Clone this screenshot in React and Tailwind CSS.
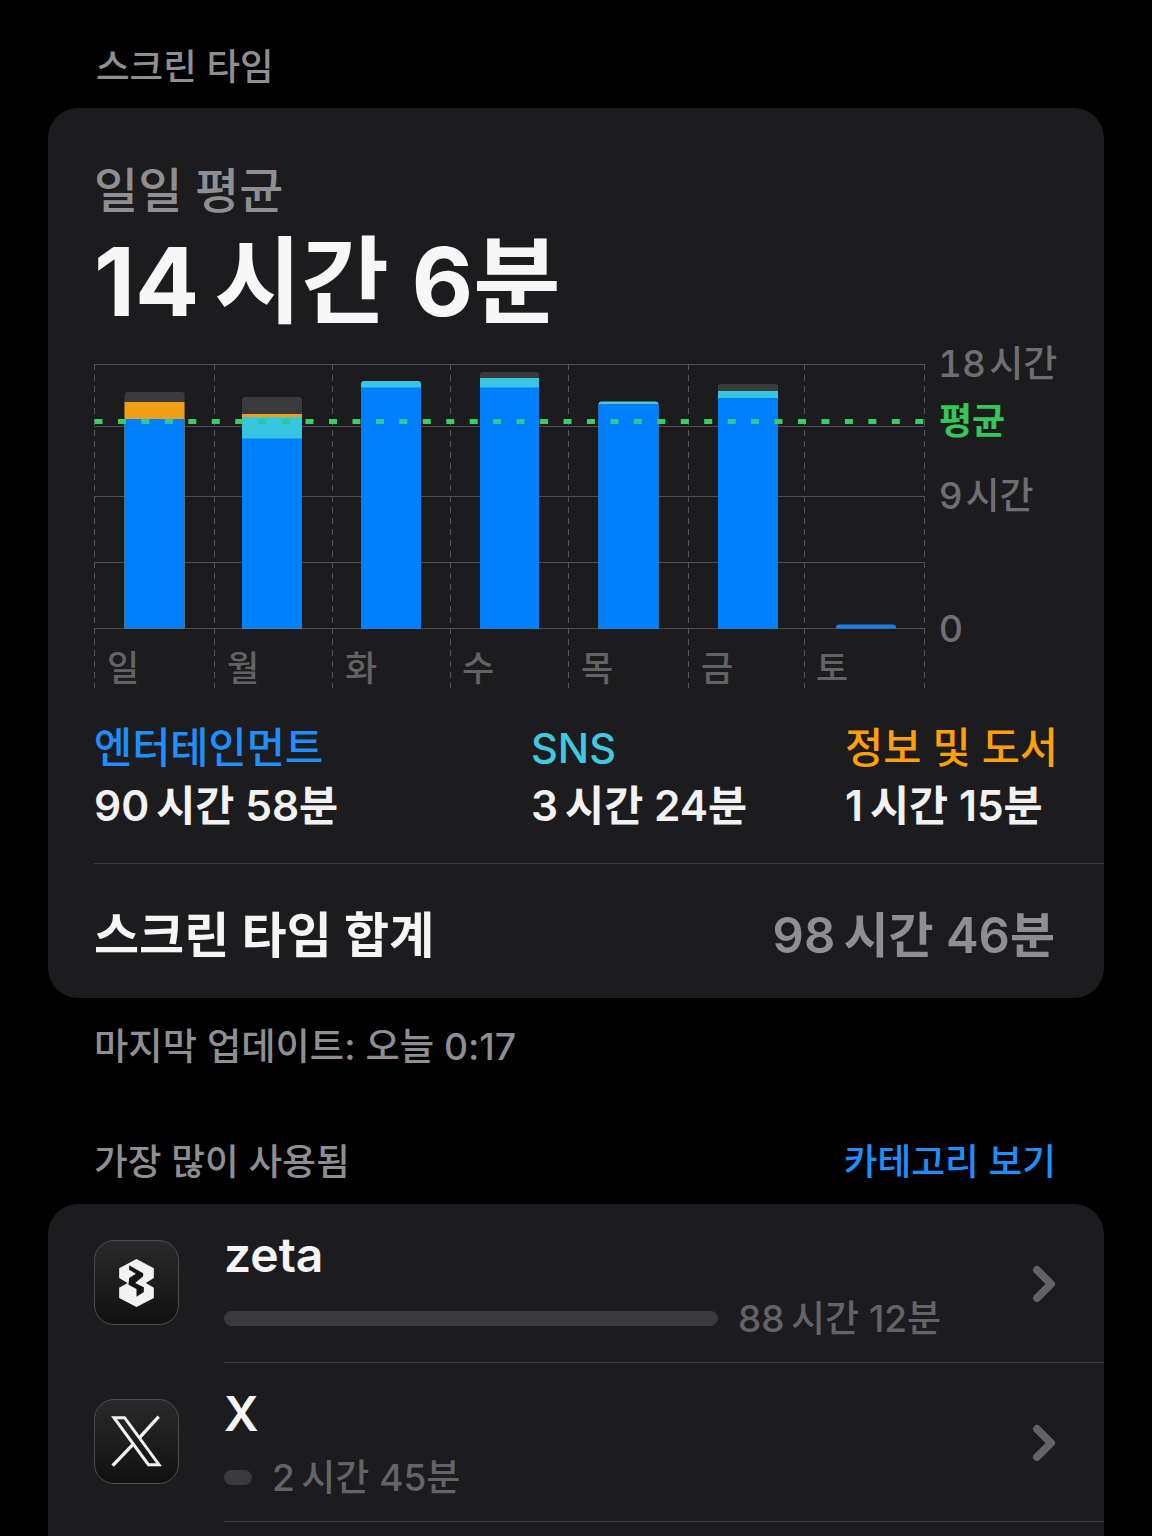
import React from 'react'
import { ChevronRight } from 'lucide-react'

const font = { fontFamily: '"Inter", "Noto Sans CJK KR", sans-serif' }

const gridY = [364.5, 426.5, 496.5, 562.5, 628.5]
const gridX = [94.5, 214.5, 332.5, 450.5, 568.5, 688.5, 804.5, 924.5]
const days = [
  ['일', 107],
  ['월', 227],
  ['화', 345],
  ['수', 462],
  ['목', 581],
  ['금', 701],
  ['토', 816],
]

// each segment is [top y, colour], drawn down to the baseline in order
const bars = [
  { x: 124.5, w: 60, segs: [[392, '#3a3a3c'], [402, '#f09f14'], [419, '#0080ff']] },
  { x: 242, w: 60, segs: [[397, '#3a3a3c'], [414, '#f09f14'], [417, '#37c5e0'], [438.5, '#0080ff']] },
  { x: 361, w: 60, segs: [[381, '#37c5e0'], [387.5, '#0080ff']] },
  { x: 480, w: 59, segs: [[372, '#3a3a3c'], [378, '#37c5e0'], [387.5, '#0080ff']] },
  { x: 598.5, w: 60, segs: [[401.5, '#58c4d8'], [404, '#0080ff']] },
  { x: 718, w: 60, segs: [[384, '#3a3c3e'], [391, '#37c5e0'], [398, '#0080ff']] },
  { x: 836, w: 60, segs: [[624.5, '#1a7fe6']] },
]

const dashes = Array.from({ length: 36 }, (_, i) => 94.5 + i * 23.45)

function inBar(x) {
  return bars.slice(0, 6).some((b) => x + 4 > b.x && x + 4 < b.x + b.w)
}

function Chart() {
  return (
    <svg width="1010" height="352" viewBox="94 340 1010 352" className="block" style={font}>
      {gridY.map((y) => (
        <line key={y} x1="94" x2="925" y1={y} y2={y} stroke="#4e4e50" strokeWidth="1" />
      ))}
      {gridX.map((x) => (
        <line key={x} x1={x} x2={x} y1="364" y2="688" stroke="#55555a" strokeWidth="1" strokeDasharray="6 5" />
      ))}
      {bars.map((b) => (
        <g key={b.x}>
          <path
            d={`M${b.x} 628.5V${b.segs[0][0] + 3}q0 -3 3 -3H${b.x + b.w - 3}q3 0 3 3V628.5z`}
            fill={b.segs[0][1]}
          />
          {b.segs.slice(1).map(([y, c]) => (
            <rect key={y} x={b.x} y={y} width={b.w} height={628.5 - y} fill={c} />
          ))}
        </g>
      ))}
      {dashes.map((x) => (
        <rect key={x} x={x} y="419" width="8" height="5" fill={inBar(x) ? '#2cc6a0' : '#3ccb64'} />
      ))}
      {days.map(([d, x]) => (
        <text key={d} x={x} y="681" fontSize="35" fontWeight="500" fill="#636366">
          {d}
        </text>
      ))}
      <text x="938" y="377" fontSize="37" fontWeight="500" fill="#6e6e73" className="tabular-nums">18{'\u200a'}시간</text>
      <text x="939" y="434" fontSize="36" fontWeight="600" fill="#34c759">평균</text>
      <text x="939" y="509" fontSize="37" fontWeight="500" fill="#6e6e73">9{'\u200a'}시간</text>
      <text x="939" y="642" fontSize="37" fontWeight="500" fill="#6e6e73">0</text>
    </svg>
  )
}

function Category({ label, color, value }) {
  return (
    <div>
      <div className="text-[41.5px] leading-[58px] font-medium" style={{ color }}>
        {label}
      </div>
      <div className="text-[42.5px] leading-[58px] font-semibold text-[#f2f2f2] whitespace-nowrap">
        {value}
      </div>
    </div>
  )
}

function ZetaIcon() {
  return (
    <svg width="37" height="50" viewBox="85 65 110 150">
      <path
        d="M140 68 192 96V125L168 140 192 154V185L140 212 88 185V154L113 140 88 125V96z"
        fill="#f2f2f2"
      />
      <path d="M118 87 160 111V120L136 140 162 153V167L140 181V158L116 145 118 125 138 112 118 100z" fill="#141414" />
    </svg>
  )
}

function XIcon() {
  return (
    <svg width="53" height="53" viewBox="60 60 160 160">
      <path d="M72 68H104L208 210H176z" fill="none" stroke="#f2f2f2" strokeWidth="9" />
      <path d="M207 65 148 130M128 150 68 213" fill="none" stroke="#f2f2f2" strokeWidth="10" />
    </svg>
  )
}

function AppRow({ icon, name, barWidth, time }) {
  return (
    <div className="flex items-stretch h-[159px]">
      <div className="w-[130px] shrink-0 flex items-center pb-[2px]">
        <div className="w-[85px] h-[85px] rounded-[20px] border border-[#4c4c4e] bg-gradient-to-b from-[#2a2a2b] to-[#111112] flex items-center justify-center">
          {icon}
        </div>
      </div>
      <div className="flex-1 border-b border-[#3e3e40] relative pt-[21px]">
        <div className="text-[48px] leading-[60px] font-semibold text-[#f5f5f5]">{name}</div>
        <div className="flex items-center mt-[10px] gap-[20px]">
          <div className="h-[15px] rounded-full bg-[#3a3a3c]" style={{ width: barWidth }} />
          <span className="text-[37px] leading-[44px] font-medium text-[#646468] mt-[2px]">{time}</span>
        </div>
        <ChevronRight
          size={56}
          strokeWidth={3.4}
          color="#636366"
          className="absolute right-[32px] top-[52px]"
        />
      </div>
    </div>
  )
}

export default function App() {
  return (
    <div className="w-[1152px] h-[1536px] bg-black overflow-hidden px-12" style={font}>
      <div className="pt-[42px] h-[108px] pl-[48px] text-[36.5px] leading-[50px] font-medium text-[#8e8e93]">
        스크린 타임
      </div>

      {/* Daily average card */}
      <div className="h-[890px] rounded-[30px] bg-[#1c1c1e] pl-[46px] pt-[54px]">
        <div className="text-[48px] leading-[58px] font-medium text-[#8e8e93]">일일 평균</div>
        <div className="text-[95px] leading-[120px] font-bold text-[#f7f7f7] whitespace-nowrap mt-[2px]">
          14{'\u2009'}시간 6분
        </div>
        <div className="mt-[-2px]">
          <Chart />
        </div>
        <div className="grid grid-cols-[437px_314px_1fr] mt-[27px]">
          <Category label="엔터테인먼트" color="#1f8fff" value={`90\u2009시간 58분`} />
          <Category label="SNS" color="#40c8e0" value={`3\u2009시간 24분`} />
          <Category label="정보 및 도서" color="#ff9f0a" value={`1\u2009시간 15분`} />
        </div>
        <div className="mt-[28px] border-t border-[#3a3a3c] h-[135px] flex items-center justify-between pr-[49px] pt-[10px]">
          <span className="text-[49px] font-semibold text-[#f5f5f5]">스크린 타임 합계</span>
          <span className="text-[49px] font-semibold text-[#8e8e93]">98{'\u2009'}시간 46분</span>
        </div>
      </div>

      <div className="pl-[46px] mt-[24px] text-[37.3px] leading-[50px] font-medium text-[#8e8e93]">
        마지막 업데이트: 오늘 0:17
      </div>

      <div className="flex justify-between pl-[46px] pr-[48px] mt-[65px] text-[36.7px] leading-[50px] font-medium">
        <span className="text-[#8e8e93]">가장 많이 사용됨</span>
        <span className="text-[#1f8fff]">카테고리 보기</span>
      </div>

      {/* Most used apps */}
      <div className="mt-[17px] rounded-t-[30px] bg-[#1c1c1e] pl-[46px] h-[400px]">
        <AppRow icon={<ZetaIcon />} name="zeta" barWidth={494} time={`88\u2009시간 12분`} />
        <AppRow icon={<XIcon />} name="X" barWidth={28} time={`2\u2009시간 45분`} />
      </div>
    </div>
  )
}
